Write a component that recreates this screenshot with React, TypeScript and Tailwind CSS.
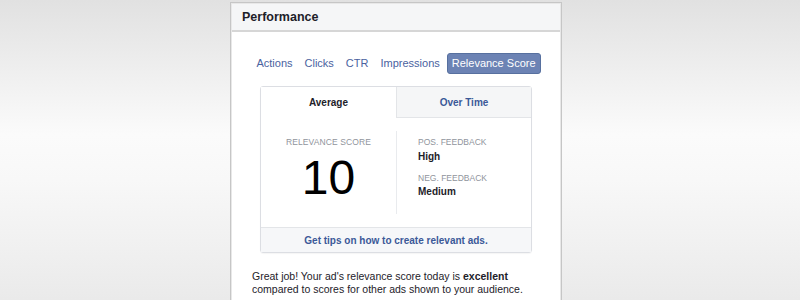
const tabs = ["Actions", "Clicks", "CTR", "Impressions"];

export default function App() {
  return (
    <div className="h-[300px] w-[800px] overflow-hidden bg-[linear-gradient(to_bottom,#e1e1e1,#fbfbfb_45%,#f8f8f8_60%,#eaeaea)] font-['Liberation_Sans',Arial,sans-serif] text-[#1d2129]">
      <div className="ml-[230px] mt-[2px] h-[320px] w-[332px] border border-[#c6c6c6] bg-white">
        <div className="h-full border border-[#e8e8e8]">
          {/* header */}
          <div className="flex h-[28px] items-center border-b-2 border-[#d6d6d6] bg-[#f5f6f7] pl-[10px] text-[12.5px] font-bold">
            Performance
          </div>

          {/* metric tabs */}
          <div className="mt-[21px] flex justify-center gap-[2px] text-[11px] text-[#4a62a0]">
            {tabs.map((t) => (
              <span key={t} className="flex h-[21px] items-center px-[5px]">
                {t}
              </span>
            ))}
            <span className="flex h-[21px] items-center rounded-[3px] border border-[#57709f] bg-[#6c83b4] px-[4px] text-white">
              Relevance Score
            </span>
          </div>

          {/* score card */}
          <div className="mx-auto mt-[12px] w-[272px] rounded-[3px] border border-[#dcdee3] shadow-[0_1px_1px_rgba(0,0,0,0.04)]">
            <div className="grid h-[31px] grid-cols-2 text-[10px] font-bold">
              <div className="flex items-center justify-center bg-white">Average</div>
              <div className="flex items-center justify-center border-b border-l border-[#e3e5e8] bg-[#f5f6f7] text-[#3b5998]">
                Over Time
              </div>
            </div>

            <div className="grid h-[109px] grid-cols-2">
              <div className="flex flex-col items-center pt-[19px]">
                <div className="text-[8.5px] uppercase leading-[11px] tracking-[0.1px] text-[#90949c]">
                  Relevance Score
                </div>
                <div className="mt-[6px] text-[48px] leading-[48px] text-black">10</div>
              </div>
              <div className="my-[13px] border-l border-[#e9ebee] pl-[21px] pt-[6px]">
                <div className="text-[8.5px] uppercase leading-[11px] text-[#90949c]">Pos. Feedback</div>
                <div className="mt-[3px] text-[10px] font-bold leading-[12px]">High</div>
                <div className="mt-[10px] text-[8.5px] uppercase leading-[11px] text-[#90949c]">Neg. Feedback</div>
                <div className="mt-[2px] text-[10px] font-bold leading-[12px]">Medium</div>
              </div>
            </div>

            <div className="flex h-[25px] items-center justify-center border-t border-[#e3e5e8] bg-[#f6f7f9] text-[10px] font-bold text-[#3b5998]">
              Get tips on how to create relevant ads.
            </div>
          </div>

          <p className="mt-[17px] px-[20px] text-[10.5px] leading-[13px]">
            Great job! Your ad's relevance score today is <b>excellent</b> compared to scores for other ads shown to your audience.
          </p>
        </div>
      </div>
    </div>
  );
}
